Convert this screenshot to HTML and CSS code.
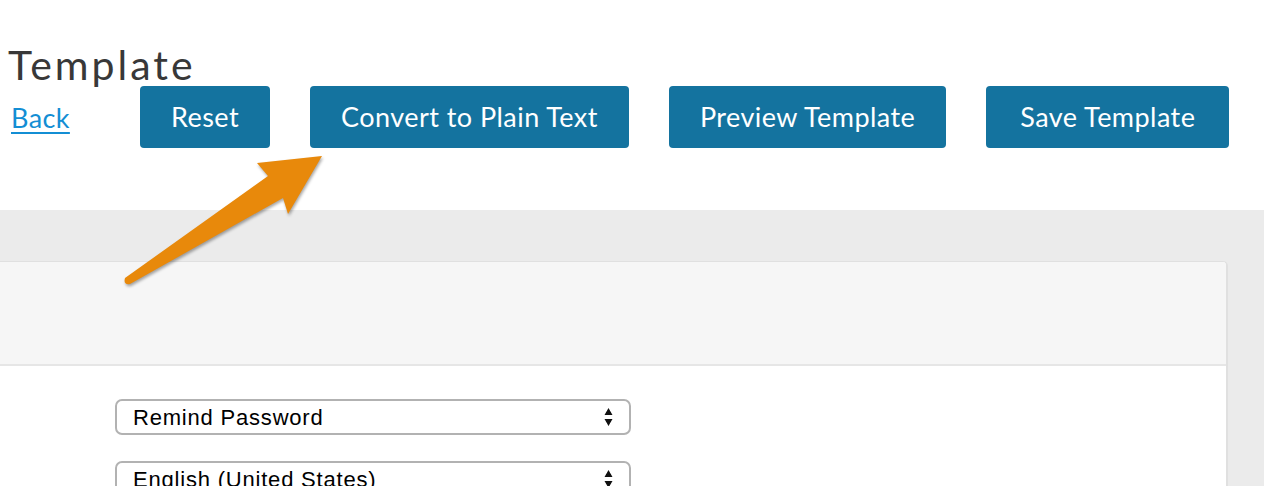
FILE: index.html
```html
<!DOCTYPE html>
<html lang="en">
<head>
<meta charset="utf-8">
<title>Template</title>
<link rel="stylesheet" href="styles.css">
</head>
<body>
<div class="page">
  <header class="top">
    <h1 class="title">Template</h1>
    <div class="toolbar">
      <div class="back-wrap"><a href="#" class="back">Back</a></div>
      <div class="actions">
        <button class="btn" type="button">Reset</button>
        <button class="btn" type="button">Convert to Plain Text</button>
        <button class="btn" type="button">Preview Template</button>
        <button class="btn btn-wide" type="button">Save Template</button>
      </div>
    </div>
  </header>
  <section class="workspace">
    <div class="panel">
      <div class="panel-head"></div>
      <div class="panel-body">
        <div class="select-wrap">
          <select class="select"><option>Remind Password</option></select>
          <svg class="select-arrows" width="9" height="20" viewBox="0 0 9 20"><path d="M4.5 1 L8.5 8 L0.5 8 Z M0.5 12 L8.5 12 L4.5 19 Z" fill="#111"/></svg>
        </div>
        <div class="select-wrap">
          <select class="select"><option>English (United States)</option></select>
          <svg class="select-arrows" width="9" height="20" viewBox="0 0 9 20"><path d="M4.5 1 L8.5 8 L0.5 8 Z M0.5 12 L8.5 12 L4.5 19 Z" fill="#111"/></svg>
        </div>
      </div>
    </div>
  </section>
</div>
<svg class="callout" width="1264" height="486" viewBox="0 0 1264 486">
  <path class="callout-arrow" d="M125 278 L268 176 L257 163 L322 156 L288 214 L283 198 L130 284 Q123 285 125 278 Z"/>
</svg>
</body>
</html>
```
FILE: styles.css
```css
html, body {
  margin: 0;
  padding: 0;
  background: #ffffff;
}
.page {
  width: 1264px;
  height: 486px;
  overflow: hidden;
  display: flex;
  flex-direction: column;
}
.top {
  padding-left: 8px;
}
.title {
  margin: 45px 0 0 0;
  font-family: Lato, "Open Sans", sans-serif;
  font-weight: 400;
  font-size: 41px;
  line-height: 40px;
  letter-spacing: 3px;
  color: #383838;
}
.toolbar {
  margin-top: 1px;
  display: flex;
  align-items: center;
  height: 62px;
}
.back-wrap {
  width: 129px;
  padding-left: 3px;
}
.back {
  font-family: Lato, "Open Sans", sans-serif;
  font-size: 27px;
  letter-spacing: 0.4px;
  color: #138ed4;
  text-decoration: underline;
  text-underline-offset: 4px;
  text-decoration-thickness: 2px;
}
.actions {
  display: flex;
  gap: 40px;
}
.btn {
  height: 62px;
  padding: 0 31px;
  border: none;
  border-radius: 4px;
  background: #14739f;
  color: #ffffff;
  font-family: Lato, "Open Sans", sans-serif;
  font-size: 27px;
  letter-spacing: 0.45px;
  line-height: 62px;
  cursor: pointer;
}
.btn-wide {
  padding: 0 34px;
}
.workspace {
  margin-top: 62px;
  flex: 1;
  background: #ebebeb;
  padding-top: 51px;
}
.panel {
  box-sizing: border-box;
  margin-left: -12px;
  width: 1240px;
  height: 100%;
  border: 1px solid #e0e0e0;
  border-right-width: 2px;
  border-bottom: none;
  border-radius: 0 5px 0 0;
  background: #ffffff;
  overflow: hidden;
}
.panel-head {
  height: 102px;
  background: #f6f6f6;
  border-bottom: 2px solid #e6e6e6;
}
.panel-body {
  padding: 33px 0 0 126px;
}
.select-wrap {
  position: relative;
  width: 516px;
  margin-bottom: 26px;
}
.select {
  appearance: none;
  -webkit-appearance: none;
  box-sizing: border-box;
  width: 516px;
  height: 36px;
  border: 2px solid #b2b2b2;
  border-radius: 7px;
  background: #ffffff;
  padding: 0 0 0 16px;
  font-family: "Liberation Sans", Arial, sans-serif;
  font-size: 22px;
  letter-spacing: 0.8px;
  color: #000000;
  display: block;
}
.select-arrows {
  position: absolute;
  right: 18px;
  top: 8px;
  pointer-events: none;
}
.callout {
  position: absolute;
  left: 0;
  top: 0;
  pointer-events: none;
}
.callout-arrow {
  fill: #e8890b;
  filter: drop-shadow(1px 2px 1.5px rgba(0, 0, 0, 0.35));
}
```
